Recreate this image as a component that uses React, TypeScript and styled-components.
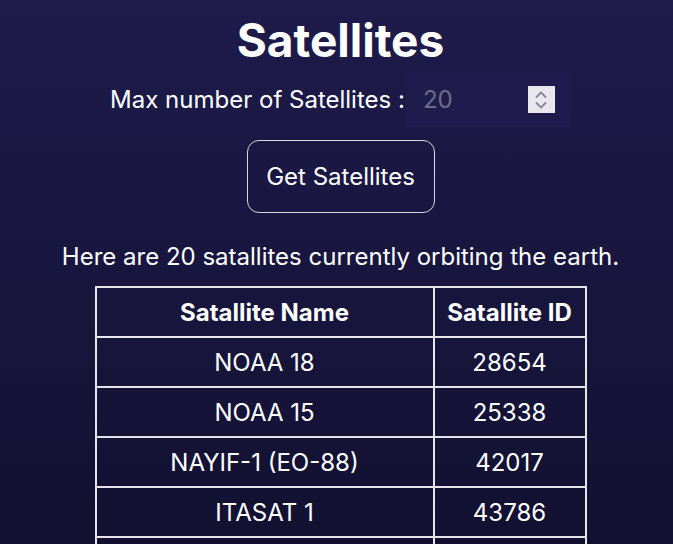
import React, { useState } from 'react';
import { styled, createGlobalStyle } from 'styled-components';

const satellites = [
  { name: 'NOAA 18', id: 28654 },
  { name: 'NOAA 15', id: 25338 },
  { name: 'NAYIF-1 (EO-88)', id: 42017 },
  { name: 'ITASAT 1', id: 43786 },
  { name: 'TIANQI-3', id: 44554 },
];

const App = () => {
  const [max, setMax] = useState('20');

  return (
    <>
      <GlobalStyle />
      <Page>
        <Title>Satellites</Title>
        <FieldRow>
          <Label htmlFor='max'>Max number of Satellites :</Label>
          <InputBox>
            <NumberInput id='max' type='number' value={max} onChange={e => setMax(e.target.value)} />
            <Spinner>
              <svg width='14' height='22' viewBox='0 0 14 22' fill='none' stroke='#8a8898' strokeWidth='1.8' strokeLinecap='round' strokeLinejoin='round'>
                <path d='M2.5 8l4.5-4.5 4.5 4.5' />
                <path d='M2.5 14l4.5 4.5 4.5-4.5' />
              </svg>
            </Spinner>
          </InputBox>
        </FieldRow>
        <GetButton>Get Satellites</GetButton>
        <Summary>Here are 20 satallites currently orbiting the earth.</Summary>
        <Table>
          <thead>
            <tr>
              <Th $width={336}>Satallite Name</Th>
              <Th $width={150}>Satallite ID</Th>
            </tr>
          </thead>
          <tbody>
            {satellites.map(sat => (
              <tr key={sat.id}>
                <Td>{sat.name}</Td>
                <Td>{sat.id}</Td>
              </tr>
            ))}
          </tbody>
        </Table>
      </Page>
    </>
  );
};

const GlobalStyle = createGlobalStyle`
  html, body {
    margin: 0;
    min-height: 100%;
    background: linear-gradient(180deg, #1e1b4b 0%, #121131 544px);
    background-color: #121131;
    font-family: Inter, 'Noto Sans', sans-serif;
    color: #ffffff;
  }
`;

const Page = styled.div`
  display: flex;
  flex-direction: column;
  align-items: center;
  padding: 12px 0 0 8px;
`;

const Title = styled.h1`
  margin: 0;
  font-size: 46px;
  font-weight: 700;
  line-height: 56px;
`;

const FieldRow = styled.div`
  display: flex;
  align-items: center;
  margin-top: 4px;
`;

const Label = styled.label`
  font-size: 24px;
  line-height: 29px;
  margin-right: 1px;
`;

const InputBox = styled.div`
  display: flex;
  align-items: center;
  width: 165px;
  height: 55px;
  box-sizing: border-box;
  padding: 0 16px 0 17px;
  background: #1f1c4d;
`;

const NumberInput = styled.input`
  flex: 1;
  min-width: 0;
  border: none;
  outline: none;
  background: transparent;
  color: #6e6c85;
  font-family: Inter, 'Noto Sans', sans-serif;
  font-size: 24px;
  padding: 0;
  appearance: textfield;
  -moz-appearance: textfield;
  &::-webkit-inner-spin-button,
  &::-webkit-outer-spin-button {
    -webkit-appearance: none;
    margin: 0;
  }
`;

const Spinner = styled.div`
  display: flex;
  align-items: center;
  justify-content: center;
  width: 27px;
  height: 27px;
  background: #e8e7ee;
`;

const GetButton = styled.button`
  margin-top: 13px;
  width: 188px;
  height: 73px;
  border: 1px solid #d8d8e0;
  border-radius: 12px;
  background: transparent;
  color: #ffffff;
  font-family: Inter, 'Noto Sans', sans-serif;
  font-size: 24px;
  cursor: pointer;
`;

const Summary = styled.p`
  margin: 29px 0 0;
  font-size: 24px;
  line-height: 30px;
`;

const Table = styled.table`
  margin-top: 14px;
  border-collapse: collapse;
  border: 2px solid #e6e6ea;
`;

const Th = styled.th<{ $width: number }>`
  width: ${({ $width }) => $width}px;
  height: 48px;
  padding: 0;
  border: 2px solid #e6e6ea;
  font-size: 24px;
  font-weight: 700;
  text-align: center;
`;

const Td = styled.td`
  height: 48px;
  padding: 0;
  border: 2px solid #e6e6ea;
  font-size: 24px;
  text-align: center;
`;

export default App;
